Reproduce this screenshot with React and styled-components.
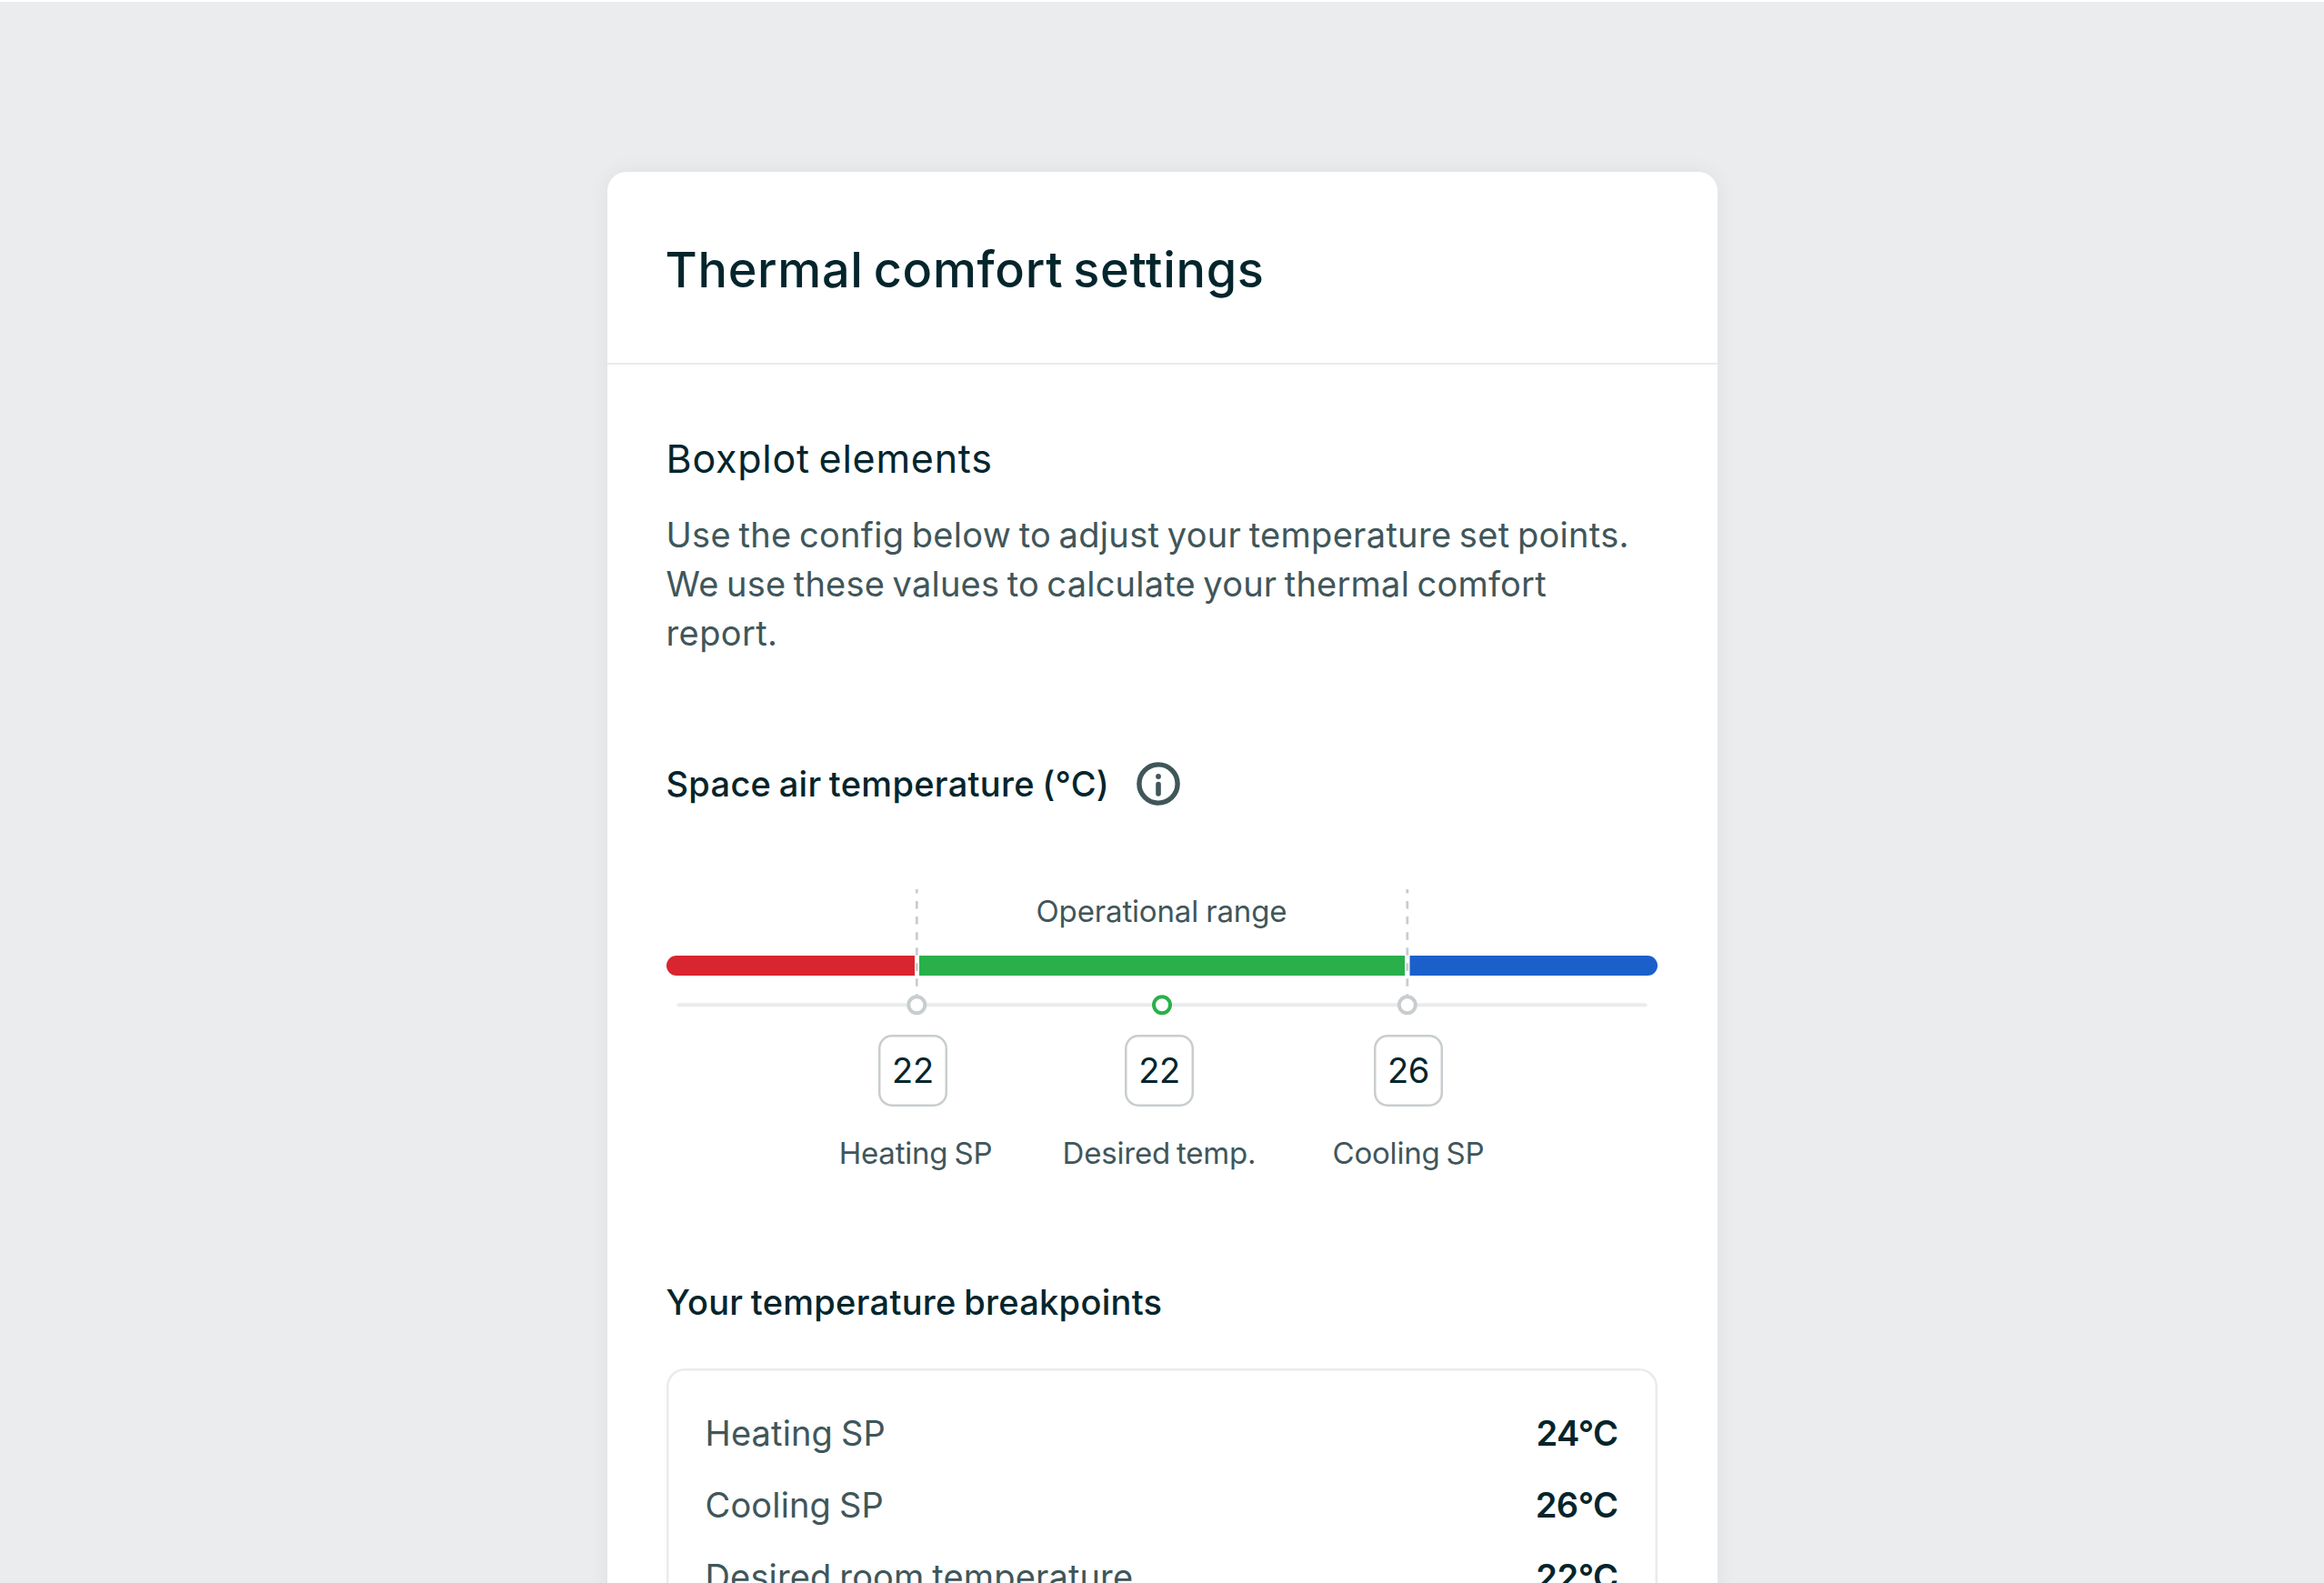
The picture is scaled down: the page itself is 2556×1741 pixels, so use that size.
import React from "react"
import styled, { createGlobalStyle } from "styled-components"

const GlobalStyle = createGlobalStyle`
  :root {
    --clr-ink: #04252c;
    --clr-muted: #40565a;
    --clr-line: #e9ebec;
    --clr-marker: #c8cdcf;
    --clr-heat: #d9252f;
    --clr-ok: #29b04a;
    --clr-cool: #1b5fcb;
  }

  * {
    box-sizing: border-box;
    margin: 0;
  }

  body {
    font-family: Inter, "Liberation Sans", sans-serif;
    color: var(--clr-ink);
  }
`

const Page = styled.main`
  height: 1741px;
  padding-top: 187px;
  overflow: hidden;
  background: #ebeced;
  border-top: 2px solid #fff;
`

const Card = styled.section`
  width: 1221px;
  height: 1800px;
  margin: 0 auto;
  background: #fff;
  border-radius: 21px;
  box-shadow: 0 0 24px rgba(20, 40, 30, 0.06);
`

const CardHeader = styled.header`
  height: 212px;
  padding: 76px 64px 0;
  border-bottom: 2px solid var(--clr-line);
`

const Title = styled.h1`
  font-size: 54px;
  font-weight: 500;
  line-height: 64px;
  letter-spacing: 0.7px;
  word-spacing: -4px;
`

const CardBody = styled.div`
  padding: 76px 66px 0 65px;
`

const Subtitle = styled.h2`
  font-size: 43px;
  font-weight: 400;
  line-height: 54px;
  letter-spacing: 0.75px;
  word-spacing: -3px;
`

const Description = styled.p`
  margin-top: 30px;
  font-size: 38px;
  line-height: 54px;
  color: var(--clr-muted);
`

const DescriptionLine = styled.span`
  display: block;
  white-space: nowrap;
  letter-spacing: ${props => props.$tracking}px;
  word-spacing: -2.5px;
`

const HeadingRow = styled.div`
  display: flex;
  align-items: center;
  gap: 30px;
  height: 56px;
  margin-top: 111px;
`

const Heading = styled.h3`
  font-size: 38px;
  font-weight: 500;
  line-height: 50px;
  letter-spacing: 0.3px;
  word-spacing: -2px;
`

const Chart = styled.svg`
  display: block;
  width: 1090px;
  height: 139px;
  margin-top: 88px;

  text {
    font-size: 33px;
    letter-spacing: -0.15px;
    word-spacing: -1px;
    fill: var(--clr-muted);
  }
`

const SetPoints = styled.div`
  display: grid;
  grid-template-columns: 271px 271px 277px;
  justify-items: center;
  margin-top: 21px;
  padding-left: 136px;
`

const SetPoint = styled.div`
  display: flex;
  flex-direction: column;
  align-items: center;
`

const ValueBox = styled.div`
  display: flex;
  align-items: center;
  justify-content: center;
  width: 76px;
  height: 79px;
  padding-bottom: 2px;
  box-shadow: inset 0 0 0 2.5px var(--clr-marker);
  border-radius: 15px;
  font-size: 38px;
  letter-spacing: -0.3px;
`

const SetPointLabel = styled.span`
  margin-top: 29px;
  padding-left: ${props => props.$indent || 0}px;
  font-size: 33px;
  line-height: 44px;
  letter-spacing: -0.2px;
  word-spacing: -2px;
  white-space: nowrap;
  color: var(--clr-muted);
`

const BreakpointsHeading = styled(Heading)`
  margin-top: 117px;
`

const Breakpoints = styled.dl`
  height: 500px;
  margin-top: 48px;
  padding: 31px 43px 0;
  box-shadow: inset 0 0 0 2.5px var(--clr-line);
  border-radius: 20px;
`

const Breakpoint = styled.div`
  display: flex;
  align-items: center;
  justify-content: space-between;
  height: 79px;
  font-size: 38px;

  dt {
    letter-spacing: 0.15px;
    word-spacing: -2px;
    color: var(--clr-muted);
  }

  dd {
    font-weight: 560;
    letter-spacing: -0.5px;
  }
`

const setPoints = [
  { label: "Heating SP", value: 22, indent: 6 },
  { label: "Desired temp.", value: 22 },
  { label: "Cooling SP", value: 26 },
]

const breakpoints = [
  { label: "Heating SP", value: "24°C" },
  { label: "Cooling SP", value: "26°C" },
  { label: "Desired room temperature", value: "22°C" },
]

function InfoIcon() {
  return (
    <svg width="48" height="48" viewBox="0 0 48 48" fill="none">
      <circle cx="24" cy="24" r="21.1" stroke="#40565a" strokeWidth="5.4" />
      <circle cx="24" cy="16" r="2.9" fill="#40565a" />
      <rect x="21.2" y="21.8" width="5.6" height="16" rx="2.8" fill="#40565a" />
    </svg>
  )
}

function SetPointMarker({ x }) {
  return (
    <>
      <line
        x1={x}
        y1="0"
        x2={x}
        y2="118"
        stroke="var(--clr-marker)"
        strokeWidth="2.8"
        strokeDasharray="8.5 8.55"
        strokeDashoffset="4"
      />
      <circle
        cx={x}
        cy="127.3"
        r="9"
        fill="#fff"
        stroke="var(--clr-marker)"
        strokeWidth="4"
      />
    </>
  )
}

function RangeChart() {
  return (
    <Chart viewBox="0 0 1090 139">
      <text x="406.5" y="36">
        Operational range
      </text>
      <path d="M11 73H273V95H11A11 11 0 0 1 11 73Z" fill="var(--clr-heat)" />
      <rect x="278" y="73" width="534" height="22" fill="var(--clr-ok)" />
      <path
        d="M817.5 73H1079A11 11 0 0 1 1079 95H817.5Z"
        fill="var(--clr-cool)"
      />
      <line
        x1="13.5"
        y1="127.3"
        x2="1076.5"
        y2="127.3"
        stroke="var(--clr-line)"
        strokeWidth="4"
        strokeLinecap="round"
      />
      <SetPointMarker x={275.3} />
      <SetPointMarker x={814.8} />
      <circle
        cx="545"
        cy="127.3"
        r="9"
        fill="#fff"
        stroke="var(--clr-ok)"
        strokeWidth="4"
      />
    </Chart>
  )
}

export default function App() {
  return (
    <>
      <GlobalStyle />
      <Page>
        <Card>
          <CardHeader>
            <Title>Thermal comfort settings</Title>
          </CardHeader>
          <CardBody>
            <Subtitle>Boxplot elements</Subtitle>
            <Description>
              <DescriptionLine $tracking={0.31}>
                Use the config below to adjust your temperature set points.
              </DescriptionLine>
              <DescriptionLine $tracking={0.22}>
                We use these values to calculate your thermal comfort
              </DescriptionLine>
              <DescriptionLine $tracking={0.4}>report.</DescriptionLine>
            </Description>
            <HeadingRow>
              <Heading>Space air temperature (°C)</Heading>
              <InfoIcon />
            </HeadingRow>
            <RangeChart />
            <SetPoints>
              {setPoints.map(({ label, value, indent }) => (
                <SetPoint key={label}>
                  <ValueBox>{value}</ValueBox>
                  <SetPointLabel $indent={indent}>{label}</SetPointLabel>
                </SetPoint>
              ))}
            </SetPoints>
            <BreakpointsHeading>Your temperature breakpoints</BreakpointsHeading>
            <Breakpoints>
              {breakpoints.map(({ label, value }) => (
                <Breakpoint key={label}>
                  <dt>{label}</dt>
                  <dd>{value}</dd>
                </Breakpoint>
              ))}
            </Breakpoints>
          </CardBody>
        </Card>
      </Page>
    </>
  )
}
